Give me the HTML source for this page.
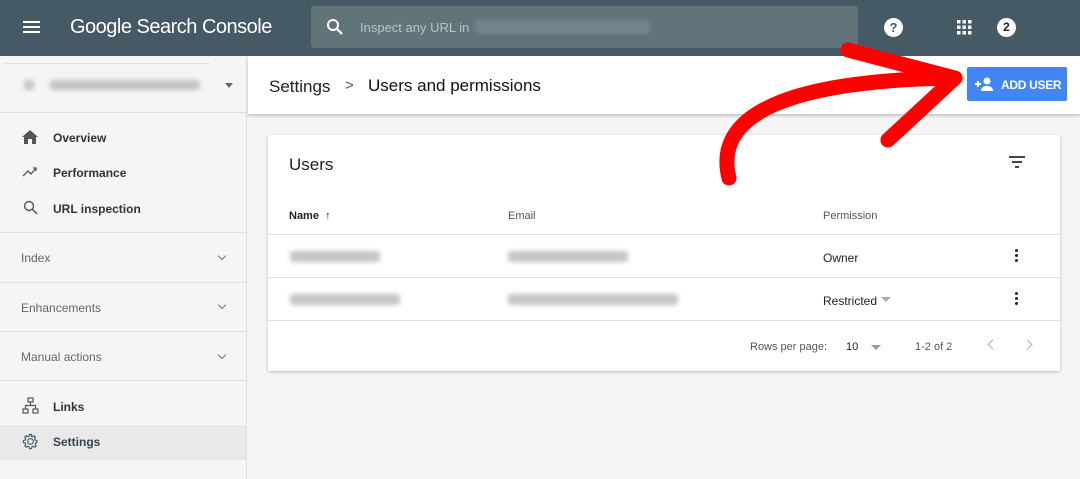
<!DOCTYPE html>
<html><head><meta charset="utf-8"><style>
*{box-sizing:border-box;margin:0;padding:0}
body{width:1080px;height:479px;overflow:hidden;background:#f5f5f5;font-family:"Liberation Sans",sans-serif;position:relative;color:#212121}
.hdr{position:absolute;left:0;top:0;width:1080px;height:56px;background:#455a64}
.blur{background:#c4c4c4;filter:blur(2.5px);position:absolute;border-radius:3px}
.side{position:absolute;left:0;top:56px;width:247px;height:423px;background:#f5f5f5;border-right:1px solid #e0e0e0}
.item{position:absolute;left:53px;font-size:12px;font-weight:bold;color:#333}
.sec{position:absolute;left:21px;font-size:12px;color:#666}
.hr{position:absolute;left:0;width:247px;height:1px;background:#e0e0e0}
.chev{position:absolute;left:219px;width:6px;height:6px;border-right:1.3px solid #777;border-bottom:1.3px solid #777;transform:rotate(45deg)}
.top{position:absolute;left:248px;top:56px;width:832px;height:58px;background:#fff;box-shadow:0 2px 3px rgba(0,0,0,.2)}
.card{position:absolute;left:268px;top:135px;width:792px;height:236px;background:#fff;box-shadow:0 1px 3px rgba(0,0,0,.25);border-radius:2px}
.t{position:absolute;font-size:11px;color:#555}
</style></head><body>
<div class="hdr">
 <div style="position:absolute;left:23px;top:21px;width:17px;height:2px;background:#fff;box-shadow:0 5px 0 #fff,0 10px 0 #fff"></div>
 <div style="position:absolute;left:70px;top:16px;color:#fff;font-size:20px;letter-spacing:-0.5px">Google Search Console</div>
 <div style="position:absolute;left:311px;top:6px;width:547px;height:42px;background:#607479;border-radius:3px"></div>
 <svg style="position:absolute;left:326px;top:18px" width="18" height="18" viewBox="0 0 18 18"><circle cx="7" cy="7" r="5" fill="none" stroke="#fff" stroke-width="2"/><path d="M11 11l5 5" stroke="#fff" stroke-width="2.2"/></svg>
 <div style="position:absolute;left:360px;top:20px;color:#b8c4c8;font-size:13px">Inspect any URL in</div>
 <div class="blur" style="left:475px;top:20px;width:175px;height:14px;background:#72868b"></div>
 <div style="position:absolute;left:884px;top:18px;width:19px;height:19px;border-radius:50%;background:#fff;color:#455a64;font-weight:bold;font-size:13px;text-align:center;line-height:19px">?</div>
 <svg style="position:absolute;left:957px;top:20px" width="15" height="15"><g fill="#fff"><rect x="0" y="0" width="3.5" height="3.5"/><rect x="5.5" y="0" width="3.5" height="3.5"/><rect x="11" y="0" width="3.5" height="3.5"/><rect x="0" y="5.5" width="3.5" height="3.5"/><rect x="5.5" y="5.5" width="3.5" height="3.5"/><rect x="11" y="5.5" width="3.5" height="3.5"/><rect x="0" y="11" width="3.5" height="3.5"/><rect x="5.5" y="11" width="3.5" height="3.5"/><rect x="11" y="11" width="3.5" height="3.5"/></g></svg>
 <div style="position:absolute;left:997px;top:18px;width:19px;height:19px;border-radius:50%;background:#fff;color:#222;font-weight:bold;font-size:12px;text-align:center;line-height:19px">2</div>
</div>
<div class="side">
 <div style="position:absolute;left:5px;top:7px;width:205px;height:1px;background:#e0e0e0"></div>
 <div class="blur" style="left:24px;top:24px;width:10px;height:10px"></div>
 <div class="blur" style="left:50px;top:24px;width:150px;height:10px"></div>
 <div style="position:absolute;left:225px;top:27px;border:4px solid transparent;border-top:5px solid #666"></div>
 <div class="hr" style="top:56px"></div>
 <svg style="position:absolute;left:22px;top:74px" width="16" height="14"><path d="M8 0L0 7h2v7h4V9h4v5h4V7h2z" fill="#555"/></svg>
 <div class="item" style="top:75px">Overview</div>
 <svg style="position:absolute;left:22px;top:110px" width="16" height="12"><path d="M1 10l5-5 3 3 5-6M11 2h3v3" fill="none" stroke="#555" stroke-width="1.3"/></svg>
 <div class="item" style="top:110px">Performance</div>
 <svg style="position:absolute;left:23px;top:144px" width="15" height="15"><circle cx="6" cy="6" r="4.5" fill="none" stroke="#555" stroke-width="1.4"/><path d="M9.5 9.5l4.5 4.5" stroke="#555" stroke-width="1.5"/></svg>
 <div class="item" style="top:146px">URL inspection</div>
 <div class="hr" style="top:176px"></div>
 <div class="sec" style="top:195px">Index</div><div class="chev" style="top:197px"></div>
 <div class="hr" style="top:226px"></div>
 <div class="sec" style="top:245px">Enhancements</div><div class="chev" style="top:246px"></div>
 <div class="hr" style="top:275px"></div>
 <div class="sec" style="top:294px">Manual actions</div><div class="chev" style="top:296px"></div>
 <div class="hr" style="top:324px"></div>
 <svg style="position:absolute;left:22px;top:341px" width="17" height="17"><g fill="none" stroke="#555" stroke-width="1.2"><rect x="6" y="1" width="5" height="4"/><rect x="1" y="12" width="5" height="4"/><rect x="11" y="12" width="5" height="4"/><path d="M8.5 5v3.5M3.5 12V8.5h10V12"/></g></svg>
 <div class="item" style="top:344px">Links</div>
 <div style="position:absolute;left:0;top:369px;width:246px;height:35px;background:#e9e9e9"></div>
 <svg style="position:absolute;left:22px;top:377px" width="17" height="17" viewBox="0 0 24 24"><path d="M12 8a4 4 0 100 8 4 4 0 000-8zm9 5.5v-3l-2.5-.5-.8-1.9 1.4-2.1-2.1-2.1-2.1 1.4-1.9-.8L13.5 2h-3L10 4.5l-1.9.8L6 3.9 3.9 6l1.4 2.1-.8 1.9L2 10.5v3l2.5.5.8 1.9L3.9 18 6 20.1l2.1-1.4 1.9.8.5 2.5h3l.5-2.5 1.9-.8 2.1 1.4 2.1-2.1-1.4-2.1.8-1.9z" fill="none" stroke="#455a64" stroke-width="1.6"/></svg>
 <div class="item" style="top:379px;color:#37474f">Settings</div>
</div>
<div class="top">
 <div style="position:absolute;left:21px;top:21px;font-size:17px;color:#222">Settings</div>
 <div style="position:absolute;left:97px;top:21px;font-size:15px;color:#555">&gt;</div>
 <div style="position:absolute;left:120px;top:20px;font-size:17px;color:#111">Users and permissions</div>
 <div style="position:absolute;left:719px;top:11px;width:100px;height:34px;background:#4285f4;border-radius:2px;color:#fff;font-size:12px;font-weight:bold;white-space:nowrap">
  <svg style="position:absolute;left:7px;top:9px" width="20" height="16"><path d="M1 8h6M4 5v6" stroke="#fff" stroke-width="2"/><circle cx="13" cy="5" r="3.5" fill="#fff"/><path d="M7 15c0-4 3-5 6-5s6 1 6 5z" fill="#fff"/></svg>
  <span style="position:absolute;left:34px;top:11px;letter-spacing:-0.3px">ADD USER</span></div>
</div>
<div class="card">
 <div style="position:absolute;left:21px;top:20px;font-size:17px">Users</div>
 <div style="position:absolute;left:741px;top:21px;width:16px;height:2px;background:#444"></div>
 <div style="position:absolute;left:744px;top:26px;width:10px;height:2px;background:#444"></div>
 <div style="position:absolute;left:747px;top:31px;width:4px;height:2px;background:#444"></div>
 <div class="t" style="left:21px;top:75px;font-weight:bold;color:#222">Name &nbsp;↑</div>
 <div class="t" style="left:240px;top:75px">Email</div>
 <div class="t" style="left:555px;top:75px">Permission</div>
 <div style="position:absolute;left:0;top:99px;width:792px;height:1px;background:#e0e0e0"></div>
 <div class="blur" style="left:22px;top:116px;width:90px;height:11px"></div>
 <div class="blur" style="left:240px;top:116px;width:120px;height:11px"></div>
 <div class="t" style="left:555px;top:116px;font-size:12px;color:#222">Owner</div>
 <div style="position:absolute;left:747px;top:114px;width:3px;height:3px;border-radius:50%;background:#222;box-shadow:0 5px 0 #222,0 10px 0 #222"></div>
 <div style="position:absolute;left:0;top:142px;width:792px;height:1px;background:#e0e0e0"></div>
 <div class="blur" style="left:22px;top:159px;width:110px;height:11px"></div>
 <div class="blur" style="left:240px;top:159px;width:170px;height:11px"></div>
 <div class="t" style="left:555px;top:159px;font-size:12px;color:#222">Restricted</div>
 <div style="position:absolute;left:613px;top:162px;border:5px solid transparent;border-top:5px solid #aaa"></div>
 <div style="position:absolute;left:747px;top:157px;width:3px;height:3px;border-radius:50%;background:#222;box-shadow:0 5px 0 #222,0 10px 0 #222"></div>
 <div style="position:absolute;left:0;top:185px;width:792px;height:1px;background:#e0e0e0"></div>
 <div class="t" style="left:482px;top:206px">Rows per page:</div>
 <div class="t" style="left:578px;top:206px;color:#222">10</div>
 <div style="position:absolute;left:603px;top:210px;border:5px solid transparent;border-top:5px solid #999"></div>
 <div class="t" style="left:647px;top:206px">1-2 of 2</div>
 <div style="position:absolute;left:721px;top:206px;width:7px;height:7px;border-left:1.2px solid #aaa;border-bottom:1.2px solid #aaa;transform:rotate(45deg)"></div>
 <div style="position:absolute;left:756px;top:206px;width:7px;height:7px;border-right:1.2px solid #aaa;border-top:1.2px solid #aaa;transform:rotate(45deg)"></div>
</div>
<svg style="position:absolute;left:0;top:0" width="1080" height="479">
 <path d="M729 178 C712 110 800 80 955 78" fill="none" stroke="#f00" stroke-width="15" stroke-linecap="round"/>
 <path d="M848 50 L955 78 L888 140" fill="none" stroke="#f00" stroke-width="15" stroke-linecap="round" stroke-linejoin="round"/>
</svg>
</body></html>
